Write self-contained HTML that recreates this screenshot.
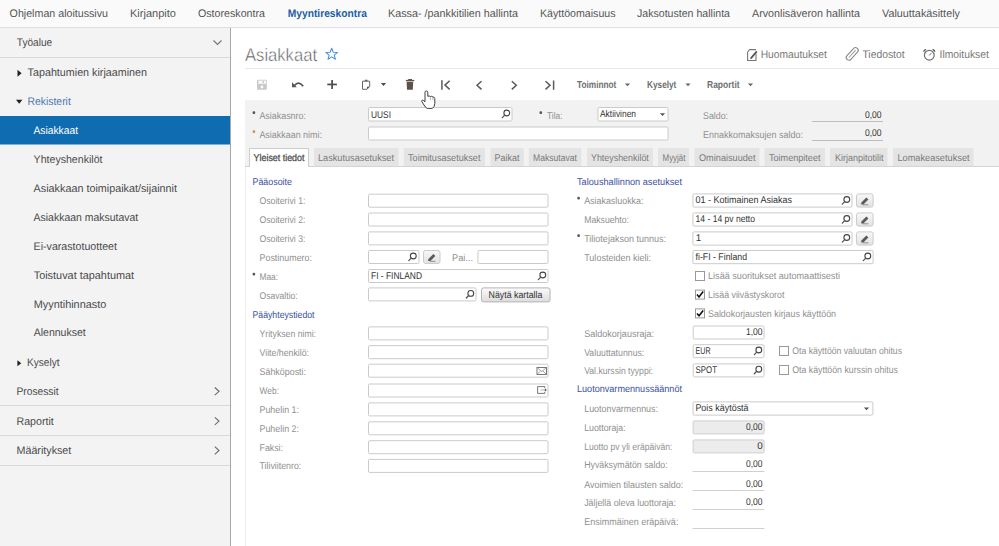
<!DOCTYPE html>
<html><head><meta charset="utf-8"><style>
html,body{margin:0;padding:0;background:#fff;width:999px;height:546px;overflow:hidden}
svg{display:block;font-family:"Liberation Sans",sans-serif;text-rendering:geometricPrecision}
</style></head><body>
<svg width="999" height="546" viewBox="0 0 999 546">
<defs>
<linearGradient id="btng" x1="0" y1="0" x2="0" y2="1"><stop offset="0" stop-color="#f8f8f8"/><stop offset="1" stop-color="#e2e2e2"/></linearGradient>
<linearGradient id="btng2" x1="0" y1="0" x2="0" y2="1"><stop offset="0" stop-color="#fbfbfb"/><stop offset="1" stop-color="#dcdcdc"/></linearGradient>
</defs>
<rect x="0" y="0" width="999" height="27" fill="#fafafa"/>
<line x1="0" y1="27.5" x2="999" y2="27.5" stroke="#e0e0e0" stroke-width="1"/>
<text x="9.60" y="16.70" font-size="11" fill="#555555" textLength="98.42" lengthAdjust="spacingAndGlyphs">Ohjelman aloitussivu</text>
<text x="130.00" y="16.70" font-size="11" fill="#555555" textLength="45.99" lengthAdjust="spacingAndGlyphs">Kirjanpito</text>
<text x="198.00" y="16.70" font-size="11" fill="#555555" textLength="66.95" lengthAdjust="spacingAndGlyphs">Ostoreskontra</text>
<text x="287.70" y="16.70" font-size="11" fill="#1a5da6" font-weight="bold" textLength="79.20" lengthAdjust="spacingAndGlyphs">Myyntireskontra</text>
<text x="388.00" y="16.70" font-size="11" fill="#555555" textLength="129.97" lengthAdjust="spacingAndGlyphs">Kassa- /pankkitilien hallinta</text>
<text x="540.00" y="16.70" font-size="11" fill="#555555" textLength="75.50" lengthAdjust="spacingAndGlyphs">Käyttöomaisuus</text>
<text x="637.00" y="16.70" font-size="11" fill="#555555" textLength="92.98" lengthAdjust="spacingAndGlyphs">Jaksotusten hallinta</text>
<text x="752.00" y="16.70" font-size="11" fill="#555555" textLength="107.96" lengthAdjust="spacingAndGlyphs">Arvonlisäveron hallinta</text>
<text x="882.00" y="16.70" font-size="11" fill="#555555" textLength="77.97" lengthAdjust="spacingAndGlyphs">Valuuttakäsittely</text>
<rect x="0" y="28" width="230" height="518" fill="#f3f3f3"/>
<line x1="230.5" y1="28" x2="230.5" y2="546" stroke="#a8a8a8" stroke-width="1"/>
<text x="16.80" y="45.80" font-size="11" fill="#4a4a4a" textLength="35.38" lengthAdjust="spacingAndGlyphs">Työalue</text>
<path d="M213.5 40.5 L217.5 44.5 L221.5 40.5" fill="none" stroke="#777" stroke-width="1.2"/>
<line x1="0" y1="57.5" x2="230" y2="57.5" stroke="#d9d9d9" stroke-width="1"/>
<path d="M17.5 69.8 L21.6 73.3 L17.5 76.8 Z" fill="#222"/>
<text x="27.60" y="76.00" font-size="11" fill="#4a4a4a" textLength="119.37" lengthAdjust="spacingAndGlyphs">Tapahtumien kirjaaminen</text>
<path d="M16 99.8 L22.4 99.8 L19.2 103.8 Z" fill="#222"/>
<text x="27.60" y="104.90" font-size="11" fill="#4a78b0" textLength="43.17" lengthAdjust="spacingAndGlyphs">Rekisterit</text>
<rect x="0" y="116" width="230" height="28.5" fill="#0f6cb0"/>
<text x="33.50" y="134.00" font-size="11" fill="#ffffff" textLength="44.51" lengthAdjust="spacingAndGlyphs">Asiakkaat</text>
<text x="33.60" y="162.80" font-size="11" fill="#4a4a4a" textLength="68.89" lengthAdjust="spacingAndGlyphs">Yhteyshenkilöt</text>
<text x="33.60" y="191.60" font-size="11" fill="#4a4a4a" textLength="143.39" lengthAdjust="spacingAndGlyphs">Asiakkaan toimipaikat/sijainnit</text>
<text x="33.60" y="220.70" font-size="11" fill="#4a4a4a" textLength="104.60" lengthAdjust="spacingAndGlyphs">Asiakkaan maksutavat</text>
<text x="33.60" y="249.50" font-size="11" fill="#4a4a4a" textLength="83.37" lengthAdjust="spacingAndGlyphs">Ei-varastotuotteet</text>
<text x="33.70" y="278.50" font-size="11" fill="#4a4a4a" textLength="100.47" lengthAdjust="spacingAndGlyphs">Toistuvat tapahtumat</text>
<text x="33.70" y="307.70" font-size="11" fill="#4a4a4a" textLength="72.60" lengthAdjust="spacingAndGlyphs">Myyntihinnasto</text>
<text x="33.70" y="336.30" font-size="11" fill="#4a4a4a" textLength="52.08" lengthAdjust="spacingAndGlyphs">Alennukset</text>
<path d="M17.4 360.2 L21.3 363.2 L17.4 366.2 Z" fill="#222"/>
<text x="27.10" y="365.50" font-size="11" fill="#4a4a4a" textLength="32.38" lengthAdjust="spacingAndGlyphs">Kyselyt</text>
<text x="16.50" y="394.80" font-size="11" fill="#4a4a4a" textLength="42.02" lengthAdjust="spacingAndGlyphs">Prosessit</text>
<path d="M214.8 387.5 L219 391.3 L214.8 395.1" fill="none" stroke="#6a6a6a" stroke-width="1.1"/>
<line x1="0" y1="405.5" x2="230" y2="405.5" stroke="#d9d9d9" stroke-width="1"/>
<text x="16.50" y="424.60" font-size="11" fill="#4a4a4a" textLength="37.32" lengthAdjust="spacingAndGlyphs">Raportit</text>
<path d="M214.8 417.3 L219 421.1 L214.8 424.90000000000003" fill="none" stroke="#6a6a6a" stroke-width="1.1"/>
<line x1="0" y1="435.5" x2="230" y2="435.5" stroke="#d9d9d9" stroke-width="1"/>
<text x="16.50" y="454.00" font-size="11" fill="#4a4a4a" textLength="54.83" lengthAdjust="spacingAndGlyphs">Määritykset</text>
<path d="M214.8 446.7 L219 450.5 L214.8 454.3" fill="none" stroke="#6a6a6a" stroke-width="1.1"/>
<line x1="0" y1="465.5" x2="230" y2="465.5" stroke="#d9d9d9" stroke-width="1"/>
<text x="245.00" y="60.90" font-size="18" fill="#5a5a5a" textLength="72.01" lengthAdjust="spacingAndGlyphs" stroke="#ffffff" stroke-width="0.45">Asiakkaat</text>
<path d="M331.7 48.3 L333.3 52.2 L337.6 52.4 L334.3 55.1 L335.4 59.2 L331.7 56.9 L328 59.2 L329.1 55.1 L325.8 52.4 L330.1 52.2 Z" fill="none" stroke="#4a92da" stroke-width="1.05" stroke-linejoin="round"/>
<line x1="245" y1="68.5" x2="999" y2="68.5" stroke="#e8e8e8" stroke-width="1"/>
<text x="760.70" y="58.00" font-size="11" fill="#777777" textLength="66.18" lengthAdjust="spacingAndGlyphs">Huomautukset</text>
<text x="862.40" y="58.00" font-size="11" fill="#777777" textLength="42.21" lengthAdjust="spacingAndGlyphs">Tiedostot</text>
<text x="939.60" y="58.00" font-size="11" fill="#777777" textLength="49.29" lengthAdjust="spacingAndGlyphs">Ilmoitukset</text>
<path d="M749.6 49.6 L756 49.6 M747.6 51.9 L749.6 49.6 M747.6 51.9 L747.6 60.5 L756 60.5 L756 53.5" fill="none" stroke="#777" stroke-width="1.1"/>
<path d="M750.6 58.6 L756.8 51.4" stroke="#555" stroke-width="1.7"/>
<g transform="rotate(-47 852.2 53.9)"><rect x="844.7" y="51.2" width="15" height="5.4" rx="2.7" fill="none" stroke="#8a8a8a" stroke-width="1.1"/><path d="M847.3 53.9 L857.3 53.9" stroke="#9a9a9a" stroke-width="1"/></g>
<circle cx="929.3" cy="55.2" r="4.9" fill="none" stroke="#707070" stroke-width="1.2"/>
<path d="M929.3 55.4 L931.2 53.2" stroke="#666" stroke-width="1"/>
<path d="M923.8 51.6 Q923.6 49.6 925.8 49.4 Z M934.8 51.6 Q935 49.6 932.8 49.4 Z" fill="#555" stroke="#555" stroke-width="1"/>
<rect x="257" y="79.8" width="9.8" height="10" fill="#c9c9c9" rx="0.8"/>
<rect x="258.4" y="80.6" width="7.6" height="3.2" fill="#fafafa"/>
<rect x="262.6" y="81" width="1.4" height="2.2" fill="#c9c9c9"/>
<circle cx="262" cy="87" r="1.4" fill="#fafafa"/>
<path d="M294.5 85.5 Q298.5 80.5 303.2 86.2" fill="none" stroke="#5a5550" stroke-width="1.7"/>
<path d="M292 82.3 L292 87.2 L296.8 87.2 Z" fill="#5a5550"/>
<rect x="327.3" y="83.6" width="9.6" height="1.7" fill="#4e4a46"/>
<rect x="331.25" y="80" width="1.7" height="9" fill="#4e4a46"/>
<path d="M364.8 81.2 L362.5 81.2 L362.5 89.3 L367 89.3 L369.7 86.5 L369.7 81.2 L367.6 81.2" fill="none" stroke="#666" stroke-width="1"/>
<path d="M364.5 81.8 L364.9 79.8 L367.5 79.8 L367.9 81.8 Z" fill="#666"/>
<path d="M367 89.3 L367 86.8 L369.7 86.5 Z" fill="#554f48"/>
<path d="M380.9 83 L386.1 83 L383.5 85.9 Z" fill="#4a4a55"/>
<rect x="405.9" y="79.9" width="8.4" height="1.3" fill="#5c5248"/>
<rect x="408.2" y="79" width="3.8" height="1.2" fill="#5c5248"/>
<path d="M406.6 81.8 L413.2 81.8 L412.8 89.7 L407 89.7 Z" fill="#5c5248"/>
<path d="M441.9 80.3 L441.9 89.7 M449.6 80.8 L445 85.1 L449.6 89.4" fill="none" stroke="#5a5a5a" stroke-width="1.5"/>
<path d="M481.5 81.2 L477 85.3 L481.5 89.4" fill="none" stroke="#5a5a5a" stroke-width="1.5"/>
<path d="M511.8 81.2 L516.3 85.3 L511.8 89.4" fill="none" stroke="#5a5a5a" stroke-width="1.5"/>
<path d="M545.5 81.2 L550 85.3 L545.5 89.4 M553.6 80.6 L553.6 89.8" fill="none" stroke="#5a5a5a" stroke-width="1.5"/>
<text x="577.00" y="87.60" font-size="10.2" fill="#6e6e6e" font-weight="bold" textLength="39.38" lengthAdjust="spacingAndGlyphs">Toiminnot</text>
<path d="M624.9 83.5 L630.1 83.5 L627.5 86.2 Z" fill="#666"/>
<text x="647.00" y="87.60" font-size="10.2" fill="#6e6e6e" font-weight="bold" textLength="29.38" lengthAdjust="spacingAndGlyphs">Kyselyt</text>
<path d="M685.4 83.5 L690.6 83.5 L688 86.2 Z" fill="#666"/>
<text x="707.00" y="87.60" font-size="10.2" fill="#6e6e6e" font-weight="bold" textLength="32.58" lengthAdjust="spacingAndGlyphs">Raportit</text>
<path d="M747.9 83.5 L753.1 83.5 L750.5 86.2 Z" fill="#666"/>
<rect x="245" y="100" width="754" height="66.5" fill="#f2f2f2"/>
<rect x="252.6" y="111.3" width="2.6" height="2.8" rx="1" fill="#555"/>
<text x="259.40" y="119.00" font-size="9.8" fill="#909090" textLength="46.60" lengthAdjust="spacingAndGlyphs">Asiakasnro:</text>
<rect x="368.5" y="107.5" width="143.5" height="13.5" rx="1.2" fill="#ffffff" stroke="#cacaca"/>
<text x="371.00" y="117.50" font-size="9.8" fill="#333333" textLength="19.99" lengthAdjust="spacingAndGlyphs">UUSI</text>
<circle cx="506.8" cy="113.0" r="2.9" fill="none" stroke="#444" stroke-width="1.1"/>
<path d="M504.7 115.1 L502.3 117.6" stroke="#555" stroke-width="1.3" stroke-linecap="round"/>
<rect x="252.6" y="130.3" width="2.6" height="2.8" rx="1" fill="#d09050"/>
<text x="259.40" y="137.80" font-size="9.8" fill="#909090" textLength="62.58" lengthAdjust="spacingAndGlyphs">Asiakkaan nimi:</text>
<rect x="368.5" y="127.0" width="299.5" height="13.0" rx="1.2" fill="#ffffff" stroke="#cacaca"/>
<rect x="539.5" y="111.3" width="2.6" height="2.8" rx="1" fill="#555"/>
<text x="547.00" y="118.80" font-size="9.8" fill="#909090" textLength="15.62" lengthAdjust="spacingAndGlyphs">Tila:</text>
<rect x="598.0" y="107.5" width="70.0" height="13.5" rx="1.2" fill="#ffffff" stroke="#cacaca"/>
<text x="600.00" y="117.00" font-size="9.8" fill="#333333" textLength="36.00" lengthAdjust="spacingAndGlyphs">Aktiivinen</text>
<path d="M659.9 113.2 L665.1 113.2 L662.5 115.9 Z" fill="#555"/>
<text x="703.00" y="119.00" font-size="9.8" fill="#909090" textLength="25.00" lengthAdjust="spacingAndGlyphs">Saldo:</text>
<text x="703.00" y="137.60" font-size="9.8" fill="#909090" textLength="99.98" lengthAdjust="spacingAndGlyphs">Ennakkomaksujen saldo:</text>
<line x1="812" y1="121.5" x2="883" y2="121.5" stroke="#bdbdbd" stroke-width="1"/>
<line x1="812" y1="140.5" x2="883" y2="140.5" stroke="#bdbdbd" stroke-width="1"/>
<text x="865.00" y="117.60" font-size="9.8" fill="#333333" textLength="16.61" lengthAdjust="spacingAndGlyphs">0,00</text>
<text x="865.00" y="136.40" font-size="9.8" fill="#333333" textLength="16.61" lengthAdjust="spacingAndGlyphs">0,00</text>
<line x1="245" y1="166.5" x2="999" y2="166.5" stroke="#d4d4d4" stroke-width="1"/>
<rect x="314" y="148" width="84.60000000000002" height="18" fill="#e4e4e4"/>
<text x="318.00" y="161.00" font-size="9.8" fill="#7a7a7a" textLength="75.98" lengthAdjust="spacingAndGlyphs">Laskutusasetukset</text>
<rect x="403.8" y="148" width="81.19999999999999" height="18" fill="#e4e4e4"/>
<text x="408.00" y="161.00" font-size="9.8" fill="#7a7a7a" textLength="72.48" lengthAdjust="spacingAndGlyphs">Toimitusasetukset</text>
<rect x="490.5" y="148" width="33.299999999999955" height="18" fill="#e4e4e4"/>
<text x="494.50" y="161.00" font-size="9.8" fill="#7a7a7a" textLength="24.99" lengthAdjust="spacingAndGlyphs">Paikat</text>
<rect x="528.8" y="148" width="52.5" height="18" fill="#e4e4e4"/>
<text x="533.00" y="161.00" font-size="9.8" fill="#7a7a7a" textLength="43.99" lengthAdjust="spacingAndGlyphs">Maksutavat</text>
<rect x="587" y="148" width="66" height="18" fill="#e4e4e4"/>
<text x="591.00" y="161.00" font-size="9.8" fill="#7a7a7a" textLength="57.79" lengthAdjust="spacingAndGlyphs">Yhteyshenkilöt</text>
<rect x="658" y="148" width="31" height="18" fill="#e4e4e4"/>
<text x="662.50" y="161.00" font-size="9.8" fill="#7a7a7a" textLength="22.99" lengthAdjust="spacingAndGlyphs">Myyjät</text>
<rect x="694.5" y="148" width="65.0" height="18" fill="#e4e4e4"/>
<text x="699.00" y="161.00" font-size="9.8" fill="#7a7a7a" textLength="56.50" lengthAdjust="spacingAndGlyphs">Ominaisuudet</text>
<rect x="764.5" y="148" width="60.5" height="18" fill="#e4e4e4"/>
<text x="769.00" y="161.00" font-size="9.8" fill="#7a7a7a" textLength="51.50" lengthAdjust="spacingAndGlyphs">Toimenpiteet</text>
<rect x="830" y="148" width="57.39999999999998" height="18" fill="#e4e4e4"/>
<text x="835.00" y="161.00" font-size="9.8" fill="#7a7a7a" textLength="48.61" lengthAdjust="spacingAndGlyphs">Kirjanpitotilit</text>
<rect x="893" y="148" width="80.60000000000002" height="18" fill="#e4e4e4"/>
<text x="897.40" y="161.00" font-size="9.8" fill="#7a7a7a" textLength="72.18" lengthAdjust="spacingAndGlyphs">Lomakeasetukset</text>
<rect x="245" y="167" width="754" height="379" fill="#ffffff"/>
<path d="M249.5 167 L249.5 148.5 L308.5 148.5 L308.5 167" fill="#ffffff" stroke="#cccccc"/>
<rect x="250" y="166" width="58" height="2" fill="#ffffff"/>
<text x="253.60" y="161.00" font-size="9.8" fill="#505050" textLength="50.81" lengthAdjust="spacingAndGlyphs" stroke="#505050" stroke-width="0.3">Yleiset tiedot</text>
<line x1="245.5" y1="167" x2="245.5" y2="546" stroke="#eeeeee" stroke-width="1"/>
<text x="252.50" y="184.70" font-size="9.8" fill="#3b4fa0" textLength="39.48" lengthAdjust="spacingAndGlyphs">Pääosoite</text>
<text x="259.50" y="204.00" font-size="9.8" fill="#909090" textLength="45.89" lengthAdjust="spacingAndGlyphs">Osoiterivi 1:</text>
<rect x="368.5" y="194.2" width="179.5" height="13.0" rx="1.2" fill="#ffffff" stroke="#cacaca"/>
<text x="259.50" y="222.90" font-size="9.8" fill="#909090" textLength="45.89" lengthAdjust="spacingAndGlyphs">Osoiterivi 2:</text>
<rect x="368.5" y="213.0" width="179.5" height="13.0" rx="1.2" fill="#ffffff" stroke="#cacaca"/>
<text x="259.50" y="241.80" font-size="9.8" fill="#909090" textLength="45.89" lengthAdjust="spacingAndGlyphs">Osoiterivi 3:</text>
<rect x="368.5" y="231.9" width="179.5" height="13.0" rx="1.2" fill="#ffffff" stroke="#cacaca"/>
<text x="259.50" y="260.60" font-size="9.8" fill="#909090" textLength="52.52" lengthAdjust="spacingAndGlyphs">Postinumero:</text>
<rect x="368.5" y="250.5" width="50.5" height="13" rx="1.2" fill="#ffffff" stroke="#cacaca"/>
<circle cx="413.3" cy="256.0" r="2.9" fill="none" stroke="#444" stroke-width="1.1"/>
<path d="M411.2 258.1 L408.8 260.6" stroke="#555" stroke-width="1.3" stroke-linecap="round"/>
<rect x="423.5" y="250.5" width="16.5" height="13" rx="2" fill="url(#btng)" stroke="#cccccc"/>
<path d="M428.1 261.0 L428.4 259.0 L433.4 254.0 L435.4 256.0 L430.4 261.0 Z" fill="#5a5a5a"/>
<path d="M429.8 261.3 L435.4 261.3" stroke="#777" stroke-width="0.8"/>
<text x="452.00" y="261.00" font-size="9.8" fill="#8e8e8e" textLength="20.99" lengthAdjust="spacingAndGlyphs">Pai...</text>
<rect x="477.9" y="250.5" width="70.10000000000002" height="13" rx="1.2" fill="#ffffff" stroke="#cacaca"/>
<rect x="252.6" y="272.8" width="2.6" height="2.8" rx="1" fill="#555"/>
<text x="259.50" y="280.00" font-size="9.8" fill="#909090" textLength="18.49" lengthAdjust="spacingAndGlyphs">Maa:</text>
<rect x="368.5" y="269.5" width="179.5" height="13" rx="1.2" fill="#ffffff" stroke="#cacaca"/>
<text x="371.00" y="278.80" font-size="9.8" fill="#333333" textLength="51.01" lengthAdjust="spacingAndGlyphs">FI - FINLAND</text>
<circle cx="542.8" cy="275.0" r="2.9" fill="none" stroke="#444" stroke-width="1.1"/>
<path d="M540.7 277.1 L538.3 279.6" stroke="#555" stroke-width="1.3" stroke-linecap="round"/>
<text x="259.50" y="298.60" font-size="9.8" fill="#909090" textLength="38.21" lengthAdjust="spacingAndGlyphs">Osavaltio:</text>
<rect x="368.5" y="287.9" width="107.5" height="13.0" rx="1.2" fill="#ffffff" stroke="#cacaca"/>
<circle cx="470.8" cy="293.4" r="2.9" fill="none" stroke="#444" stroke-width="1.1"/>
<path d="M468.7 295.5 L466.3 298.0" stroke="#555" stroke-width="1.3" stroke-linecap="round"/>
<rect x="481.5" y="287.9" width="68.5" height="14" rx="2" fill="url(#btng2)" stroke="#b4b4b4"/>
<text x="488.60" y="298.00" font-size="9.8" fill="#333333" textLength="53.75" lengthAdjust="spacingAndGlyphs">Näytä kartalla</text>
<text x="252.50" y="317.60" font-size="9.8" fill="#3b4fa0" textLength="62.01" lengthAdjust="spacingAndGlyphs">Pääyhteystiedot</text>
<text x="259.50" y="337.30" font-size="9.8" fill="#909090" textLength="56.51" lengthAdjust="spacingAndGlyphs">Yrityksen nimi:</text>
<rect x="368.5" y="326.9" width="179.5" height="13.0" rx="1.2" fill="#ffffff" stroke="#cacaca"/>
<text x="259.50" y="356.00" font-size="9.8" fill="#909090" textLength="49.52" lengthAdjust="spacingAndGlyphs">Viite/henkilö:</text>
<rect x="368.5" y="345.7" width="179.5" height="13.0" rx="1.2" fill="#ffffff" stroke="#cacaca"/>
<text x="259.50" y="375.00" font-size="9.8" fill="#909090" textLength="46.51" lengthAdjust="spacingAndGlyphs">Sähköposti:</text>
<rect x="368.5" y="364.2" width="179.5" height="13.0" rx="1.2" fill="#ffffff" stroke="#cacaca"/>
<text x="259.50" y="393.70" font-size="9.8" fill="#909090" textLength="19.51" lengthAdjust="spacingAndGlyphs">Web:</text>
<rect x="368.5" y="384.0" width="179.5" height="13.0" rx="1.2" fill="#ffffff" stroke="#cacaca"/>
<text x="259.50" y="412.70" font-size="9.8" fill="#909090" textLength="39.48" lengthAdjust="spacingAndGlyphs">Puhelin 1:</text>
<rect x="368.5" y="402.9" width="179.5" height="13.0" rx="1.2" fill="#ffffff" stroke="#cacaca"/>
<text x="259.50" y="431.50" font-size="9.8" fill="#909090" textLength="39.48" lengthAdjust="spacingAndGlyphs">Puhelin 2:</text>
<rect x="368.5" y="421.8" width="179.5" height="13.0" rx="1.2" fill="#ffffff" stroke="#cacaca"/>
<text x="259.50" y="450.50" font-size="9.8" fill="#909090" textLength="23.52" lengthAdjust="spacingAndGlyphs">Faksi:</text>
<rect x="368.5" y="440.7" width="179.5" height="13.0" rx="1.2" fill="#ffffff" stroke="#cacaca"/>
<text x="259.50" y="469.40" font-size="9.8" fill="#909090" textLength="41.82" lengthAdjust="spacingAndGlyphs">Tiliviitenro:</text>
<rect x="368.5" y="459.4" width="179.5" height="13.0" rx="1.2" fill="#ffffff" stroke="#cacaca"/>
<rect x="537" y="367.5" width="9.5" height="7" fill="none" stroke="#6a6a6a" stroke-width="0.9"/>
<path d="M537.3 367.8 L541.75 371.6 L546.2 367.8 M537.3 374.2 L540.6 371 M546.2 374.2 L542.9 371" fill="none" stroke="#8a8a8a" stroke-width="0.8"/>
<path d="M544.8 388 L544.8 386.6 L537.6 386.6 L537.6 393.4 L544.8 393.4 L544.8 392" fill="none" stroke="#6a6a6a" stroke-width="0.9"/>
<path d="M540.5 390 L544.8 390" stroke="#aaa" stroke-width="0.9"/><path d="M544.8 388.2 L546.9 390 L544.8 391.8 Z" fill="#555"/>
<text x="577.00" y="184.70" font-size="9.8" fill="#3b4fa0" textLength="105.02" lengthAdjust="spacingAndGlyphs">Taloushallinnon asetukset</text>
<rect x="577.3" y="196.8" width="2.6" height="2.8" rx="1" fill="#555"/>
<text x="584.20" y="204.00" font-size="9.8" fill="#909090" textLength="59.30" lengthAdjust="spacingAndGlyphs">Asiakasluokka:</text>
<rect x="692.9" y="193.9" width="159.10000000000002" height="13.199999999999989" rx="1.2" fill="#ffffff" stroke="#cacaca"/>
<text x="695.60" y="203.40" font-size="9.8" fill="#333333" textLength="96.39" lengthAdjust="spacingAndGlyphs">01 - Kotimainen Asiakas</text>
<circle cx="846.8" cy="199.5" r="2.9" fill="none" stroke="#444" stroke-width="1.1"/>
<path d="M844.7 201.6 L842.3 204.1" stroke="#555" stroke-width="1.3" stroke-linecap="round"/>
<rect x="856.5" y="193.9" width="16.600000000000023" height="13.199999999999989" rx="2" fill="url(#btng)" stroke="#cccccc"/>
<path d="M861.2 204.5 L861.4 202.5 L866.4 197.5 L868.4 199.5 L863.4 204.5 Z" fill="#5a5a5a"/>
<path d="M862.8 204.8 L868.4 204.8" stroke="#777" stroke-width="0.8"/>
<text x="584.20" y="222.70" font-size="9.8" fill="#909090" textLength="44.80" lengthAdjust="spacingAndGlyphs">Maksuehto:</text>
<rect x="692.9" y="212.9" width="159.10000000000002" height="13.199999999999989" rx="1.2" fill="#ffffff" stroke="#cacaca"/>
<text x="695.60" y="222.40" font-size="9.8" fill="#333333" textLength="59.39" lengthAdjust="spacingAndGlyphs">14 - 14 pv netto</text>
<circle cx="846.8" cy="218.5" r="2.9" fill="none" stroke="#444" stroke-width="1.1"/>
<path d="M844.7 220.6 L842.3 223.1" stroke="#555" stroke-width="1.3" stroke-linecap="round"/>
<rect x="856.5" y="212.9" width="16.600000000000023" height="13.199999999999989" rx="2" fill="url(#btng)" stroke="#cccccc"/>
<path d="M861.2 223.5 L861.4 221.5 L866.4 216.5 L868.4 218.5 L863.4 223.5 Z" fill="#5a5a5a"/>
<path d="M862.8 223.8 L868.4 223.8" stroke="#777" stroke-width="0.8"/>
<rect x="577.3" y="234.3" width="2.6" height="2.8" rx="1" fill="#555"/>
<text x="584.20" y="241.50" font-size="9.8" fill="#909090" textLength="81.79" lengthAdjust="spacingAndGlyphs">Tiliotejakson tunnus:</text>
<rect x="692.9" y="231.9" width="159.10000000000002" height="13.199999999999989" rx="1.2" fill="#ffffff" stroke="#cacaca"/>
<text x="695.80" y="241.10" font-size="9.8" fill="#333333">1</text>
<circle cx="846.8" cy="237.5" r="2.9" fill="none" stroke="#444" stroke-width="1.1"/>
<path d="M844.7 239.6 L842.3 242.1" stroke="#555" stroke-width="1.3" stroke-linecap="round"/>
<rect x="856.5" y="231.9" width="16.600000000000023" height="13.199999999999989" rx="2" fill="url(#btng)" stroke="#cccccc"/>
<path d="M861.2 242.5 L861.4 240.5 L866.4 235.5 L868.4 237.5 L863.4 242.5 Z" fill="#5a5a5a"/>
<path d="M862.8 242.8 L868.4 242.8" stroke="#777" stroke-width="0.8"/>
<text x="584.20" y="260.60" font-size="9.8" fill="#909090" textLength="66.81" lengthAdjust="spacingAndGlyphs">Tulosteiden kieli:</text>
<rect x="692.9" y="250.5" width="180.20000000000005" height="13.199999999999989" rx="1.2" fill="#ffffff" stroke="#cacaca"/>
<text x="695.60" y="260.20" font-size="9.8" fill="#333333" textLength="51.40" lengthAdjust="spacingAndGlyphs">fi-FI - Finland</text>
<circle cx="867.8" cy="256.0" r="2.9" fill="none" stroke="#444" stroke-width="1.1"/>
<path d="M865.7 258.1 L863.3 260.6" stroke="#555" stroke-width="1.3" stroke-linecap="round"/>
<rect x="695.5" y="271.5" width="9" height="9" fill="#fff" stroke="#999"/>
<text x="708.00" y="279.00" font-size="9.8" fill="#909090" textLength="131.98" lengthAdjust="spacingAndGlyphs">Lisää suoritukset automaattisesti</text>
<rect x="695.5" y="290.1" width="9" height="9" fill="#fff" stroke="#999"/>
<path d="M697 294.6 L699 296.90000000000003 L703.2 291.6" fill="none" stroke="#111" stroke-width="1.6"/>
<text x="708.00" y="297.60" font-size="9.8" fill="#909090" textLength="76.40" lengthAdjust="spacingAndGlyphs">Lisää viivästyskorot</text>
<rect x="695.5" y="308.9" width="9" height="9" fill="#fff" stroke="#999"/>
<path d="M697 313.4 L699 315.7 L703.2 310.4" fill="none" stroke="#111" stroke-width="1.6"/>
<text x="708.00" y="316.50" font-size="9.8" fill="#909090" textLength="128.02" lengthAdjust="spacingAndGlyphs">Saldokorjausten kirjaus käyttöön</text>
<text x="584.20" y="336.80" font-size="9.8" fill="#909090" textLength="69.82" lengthAdjust="spacingAndGlyphs">Saldokorjausraja:</text>
<rect x="693.2" y="326.0" width="70.79999999999995" height="13.0" rx="1.2" fill="#ffffff" stroke="#cacaca"/>
<text x="746.00" y="335.20" font-size="9.8" fill="#333333" textLength="16.51" lengthAdjust="spacingAndGlyphs">1,00</text>
<text x="584.20" y="355.60" font-size="9.8" fill="#909090" textLength="60.11" lengthAdjust="spacingAndGlyphs">Valuuttatunnus:</text>
<rect x="693.2" y="344.7" width="70.79999999999995" height="13.0" rx="1.2" fill="#ffffff" stroke="#cacaca"/>
<text x="695.60" y="354.20" font-size="9.8" fill="#333333" textLength="14.91" lengthAdjust="spacingAndGlyphs">EUR</text>
<circle cx="758.8" cy="350.0" r="2.9" fill="none" stroke="#444" stroke-width="1.1"/>
<path d="M756.7 352.1 L754.3 354.6" stroke="#555" stroke-width="1.3" stroke-linecap="round"/>
<rect x="779.5" y="346.5" width="9" height="9" fill="#fff" stroke="#999"/>
<text x="792.30" y="354.00" font-size="9.8" fill="#909090" textLength="109.70" lengthAdjust="spacingAndGlyphs">Ota käyttöön valuutan ohitus</text>
<text x="584.20" y="374.20" font-size="9.8" fill="#909090" textLength="68.80" lengthAdjust="spacingAndGlyphs">Val.kurssin tyyppi:</text>
<rect x="693.2" y="363.9" width="70.79999999999995" height="13.0" rx="1.2" fill="#ffffff" stroke="#cacaca"/>
<text x="695.60" y="373.40" font-size="9.8" fill="#333333" textLength="21.38" lengthAdjust="spacingAndGlyphs">SPOT</text>
<circle cx="758.8" cy="369.2" r="2.9" fill="none" stroke="#444" stroke-width="1.1"/>
<path d="M756.7 371.3 L754.3 373.8" stroke="#555" stroke-width="1.3" stroke-linecap="round"/>
<rect x="779.5" y="365.5" width="9" height="9" fill="#fff" stroke="#999"/>
<text x="792.30" y="373.00" font-size="9.8" fill="#909090" textLength="105.71" lengthAdjust="spacingAndGlyphs">Ota käyttöön kurssin ohitus</text>
<text x="577.00" y="392.00" font-size="9.8" fill="#3b4fa0" textLength="104.99" lengthAdjust="spacingAndGlyphs">Luotonvarmennussäännöt</text>
<text x="584.20" y="411.80" font-size="9.8" fill="#909090" textLength="73.79" lengthAdjust="spacingAndGlyphs">Luotonvarmennus:</text>
<rect x="693.1" y="401.9" width="179.79999999999995" height="13.200000000000045" rx="1.2" fill="#ffffff" stroke="#cacaca"/>
<text x="695.40" y="411.20" font-size="9.8" fill="#333333" textLength="53.18" lengthAdjust="spacingAndGlyphs">Pois käytöstä</text>
<path d="M863.9 407.5 L869.1 407.5 L866.5 410.2 Z" fill="#555"/>
<text x="584.20" y="430.60" font-size="9.8" fill="#909090" textLength="41.41" lengthAdjust="spacingAndGlyphs">Luottoraja:</text>
<rect x="693.1" y="420.9" width="71.0" height="13.0" rx="1.2" fill="#ececec" stroke="#cfcfcf"/>
<text x="746.00" y="430.20" font-size="9.8" fill="#333333" textLength="16.41" lengthAdjust="spacingAndGlyphs">0,00</text>
<text x="584.20" y="449.50" font-size="9.8" fill="#909090" textLength="88.19" lengthAdjust="spacingAndGlyphs">Luotto pv yli eräpäivän:</text>
<rect x="693.1" y="439.9" width="71.0" height="13.0" rx="1.2" fill="#ececec" stroke="#cfcfcf"/>
<text x="757.30" y="449.40" font-size="9.8" fill="#333333">0</text>
<text x="584.20" y="468.40" font-size="9.8" fill="#909090" textLength="83.39" lengthAdjust="spacingAndGlyphs">Hyväksymätön saldo:</text>
<line x1="692.6" y1="471.5" x2="764.3" y2="471.5" stroke="#d0d0d0" stroke-width="1"/>
<text x="746.00" y="467.40" font-size="9.8" fill="#333333" textLength="16.51" lengthAdjust="spacingAndGlyphs">0,00</text>
<text x="584.20" y="487.60" font-size="9.8" fill="#909090" textLength="99.09" lengthAdjust="spacingAndGlyphs">Avoimien tilausten saldo:</text>
<line x1="692.6" y1="490.5" x2="764.3" y2="490.5" stroke="#d0d0d0" stroke-width="1"/>
<text x="746.00" y="486.60" font-size="9.8" fill="#333333" textLength="16.51" lengthAdjust="spacingAndGlyphs">0,00</text>
<text x="584.20" y="506.30" font-size="9.8" fill="#909090" textLength="91.80" lengthAdjust="spacingAndGlyphs">Jäljellä oleva luottoraja:</text>
<line x1="692.6" y1="509.5" x2="764.3" y2="509.5" stroke="#d0d0d0" stroke-width="1"/>
<text x="746.00" y="505.30" font-size="9.8" fill="#333333" textLength="16.51" lengthAdjust="spacingAndGlyphs">0,00</text>
<text x="584.20" y="525.00" font-size="9.8" fill="#909090" textLength="94.20" lengthAdjust="spacingAndGlyphs">Ensimmäinen eräpäivä:</text>
<line x1="692.6" y1="528.5" x2="764.3" y2="528.5" stroke="#d0d0d0" stroke-width="1"/>
<path d="M425 92.2 Q425 91 426.4 91 Q427.8 91 427.8 92.2 L427.8 96.3 Q429.2 95.6 430.4 96.5 Q431.8 95.9 432.8 96.9 Q434.6 96.8 434.8 98.6 L434.8 103.5 Q434.6 106.8 432.4 108.4 L427.2 108.4 Q425.4 107.6 424 105 L421.9 101.6 Q421.3 100.4 422.6 100.2 Q423.6 100.2 425 101.8 Z" fill="#ffffff" stroke="#2a2a2a" stroke-width="0.9"/>
<path d="M430.4 96.8 L430.4 100 M432.8 97.2 L432.8 100" stroke="#999" stroke-width="0.7"/>
</svg></body></html>
